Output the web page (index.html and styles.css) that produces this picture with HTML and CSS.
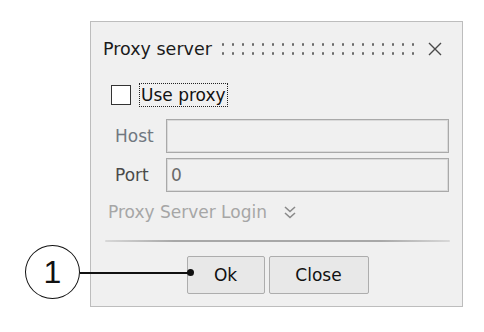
FILE: index.html
```html
<!DOCTYPE html>
<html>
<head>
<meta charset="utf-8">
<link rel="stylesheet" href="styles.css">
</head>
<body>
<div class="stage">
  <div class="dialog">
    <div class="titlebar">
      <span class="title">Proxy server</span>
      <span class="grip"></span>
      <svg class="close" width="14" height="14" viewBox="0 0 14 14"><path d="M1 1 L13 13 M13 1 L1 13" stroke="#4a4a4a" stroke-width="1.4" fill="none"/></svg>
    </div>
    <div class="content">
      <div class="check"><span class="box"></span><span class="focus">Use proxy</span></div>
      <div class="form-row"><span class="lbl lbl-host">Host</span><div class="input"></div></div>
      <div class="form-row"><span class="lbl lbl-port">Port</span><div class="input">0</div></div>
      <div class="login">Proxy Server Login
        <svg class="chev" width="14" height="15" viewBox="0 0 14 15"><path d="M2 2 L7 6.5 L12 2 M2 8 L7 12.5 L12 8" stroke="#8a8a8a" stroke-width="1.6" fill="none"/></svg>
      </div>
      <div class="sep"></div>
      <div class="buttons"><button class="btn btn-ok">Ok</button><button class="btn btn-close">Close</button></div>
    </div>
  </div>
  <div class="callout">
    <div class="circle">1</div>
    <div class="leader"></div>
    <div class="dot"></div>
  </div>
</div>
</body>
</html>
```
FILE: styles.css
```css
html, body { margin: 0; padding: 0; background: #fff; }
body { font-family: "DejaVu Sans", "Noto Sans", sans-serif; }
.stage { position: relative; width: 484px; height: 332px; padding-top: 21px; box-sizing: border-box; }
.dialog {
  margin-left: 90px; width: 373px; height: 286px; box-sizing: border-box;
  border: 1px solid #bdbdbd; background: #f0f0f0;
}
.titlebar { display: flex; align-items: center; height: 20px; margin-top: 17px; padding-left: 12px; }
.title { font-size: 17.5px; color: #1a1a1a; line-height: 20px; white-space: nowrap; }
.grip {
  flex: 0 0 auto;
  width: 192px; height: 18px; margin-left: 10px;
  background-image: radial-gradient(circle, #6a6a6a 1px, transparent 1.5px);
  background-size: 10px 9px; background-position: -4px 0px;
}
.close { flex: 0 0 auto; margin-left: auto; margin-right: 20px; }
.content { padding: 0 12px 0 14px; }
.check { display: flex; align-items: center; margin-top: 24px; height: 24px; padding-left: 6px; }
.box { width: 18px; height: 18px; border: 1px solid #333; background: #fff; }
.focus { margin-left: 9px; font-size: 17px; color: #111; line-height: 22px; outline: 1px dotted #222; padding: 0 1px; }
.form-row { display: flex; align-items: center; margin-top: 5px; }
.check + .form-row { margin-top: 12px; }
.lbl { width: 61px; padding-left: 10px; box-sizing: border-box; font-size: 17px; }
.lbl-host { color: #707880; }
.lbl-port { color: #4a4a4a; }
.input {
  width: 283px; height: 34px; box-sizing: border-box;
  border: 1px solid #a9a9a9; box-shadow: inset 0 0 0 1px #dadada;
  background: #f0f0f0; font-size: 17px; color: #6a6a6a; line-height: 32px; padding-left: 4px;
}
.login { display: flex; align-items: center; margin-top: 9px; height: 22px; padding-left: 3px; font-size: 17px; color: #a6a6a6; }
.chev { margin-left: 16px; }
.sep { margin-top: 17px; height: 2px; background: linear-gradient(to right, rgba(160,160,160,0.3), #a8a8a8 20%, #a8a8a8 80%, rgba(160,160,160,0.3)); border-radius: 1px; }
.buttons { display: flex; justify-content: center; gap: 4px; margin-top: 14px; padding-right: 0; }
.btn {
  height: 38px; box-sizing: border-box; border: 1px solid #adadad; border-radius: 2px;
  background: #e8e8e8; font-family: inherit; font-size: 17px; color: #111; padding: 0;
}
.btn-ok { width: 78px; }
.btn-close { width: 100px; }
.callout { position: absolute; left: 0; top: 0; }
.circle {
  position: absolute; left: 25px; top: 245px; width: 55px; height: 54px; box-sizing: border-box;
  border: 1.5px solid #111; border-radius: 50%; background: #fff;
  font-family: "Liberation Sans", Arial, sans-serif; font-size: 32px; color: #111;
  display: flex; align-items: center; justify-content: center;
}
.leader { position: absolute; left: 80px; top: 272px; width: 110px; height: 1.5px; background: #111; }
.dot { position: absolute; left: 187px; top: 269px; width: 7px; height: 7px; border-radius: 50%; background: #111; }
```
